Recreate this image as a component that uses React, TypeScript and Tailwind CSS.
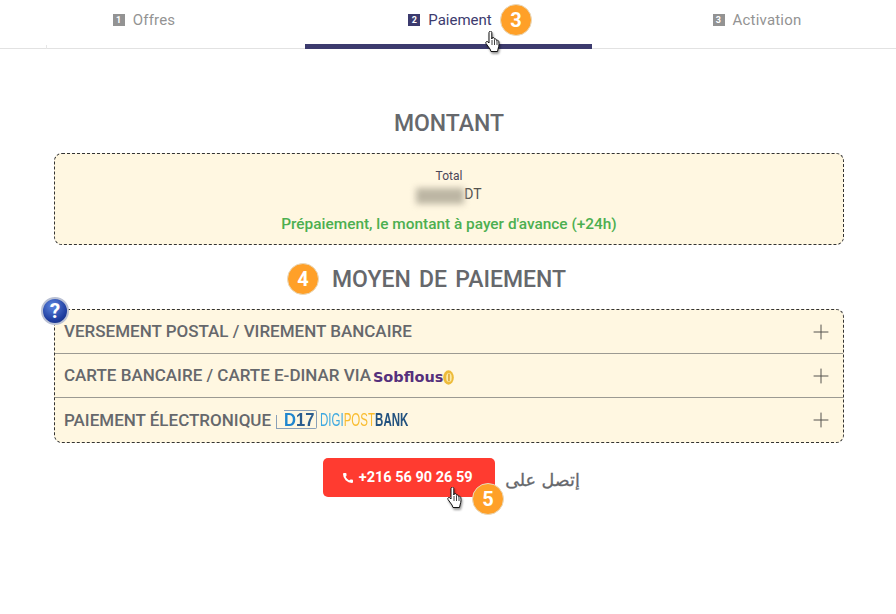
import { Phone, Plus } from "lucide-react";

const tabs = [
  { num: "1", label: "Offres", width: "w-[305px] pr-[17px] tracking-[0.2px]", active: false },
  { num: "2", label: "Paiement", width: "w-[287px] pl-[3px]", active: true },
  { num: "3", label: "Activation", width: "flex-1 pl-[26px] tracking-[0.2px]", active: false },
];

function Badge({ n, className }: { n: string; className: string }) {
  return (
    <div
      className={`absolute flex h-[32px] w-[32px] items-center justify-center rounded-full border border-[#e8d9bd] bg-[#ffa028] text-[20px] font-bold text-white ${className}`}
    >
      {n}
    </div>
  );
}

function HandCursor({ className }: { className: string }) {
  return (
    <svg
      viewBox="1 1 15 22"
      className={`absolute h-[22px] w-[16px] drop-shadow-[1px_2px_1px_rgba(0,0,0,0.4)] ${className}`}
    >
      <path
        d="M5 1.500c.9-.8 2.200-.3 2.300 1V9l.4-1.200c.8-.7 1.900-.4 2.100.6l.1.9c.7-.7 1.900-.4 2.100.6l.1.7c.8-.6 2-.2 2.200.9.4 2.300.2 4.500-.5 6.500l-.8 3.500H6.500L5.500 19 1.500 13.500c-.6-1 .1-2.200 1.200-2 .6.1 1.200.7 1.800 1.500V2.800c0-.5.100-1 .500-1.300z"
        fill="#fff"
        stroke="#111"
        strokeWidth="1"
        strokeLinejoin="round"
      />
      <path d="M7.500 10v5M10 10v5M12.500 11v4" stroke="#111" strokeWidth="0.8" fill="none" />
    </svg>
  );
}

function HelpBall() {
  return (
    <div className="absolute left-[-14px] top-[-13px] flex h-[28px] w-[28px] items-center justify-center rounded-full border-2 border-[#b9c0d4] bg-[radial-gradient(circle_at_40%_30%,#5d86e0,#1d3c9e_65%,#132a78)] text-[21px] font-bold leading-none text-white">
      ?
    </div>
  );
}

function SobflousLogo() {
  return (
    <span className="ml-[2px] mt-[4px] flex items-center">
      <span className="font-['DejaVu_Sans'] text-[14.500px] font-bold leading-none text-[#55307c]">Sobflous</span>
      <svg viewBox="0 0 12 16" className="h-[15px] w-[11px] shrink-0">
        <ellipse cx="6" cy="8" rx="5.800" ry="7.800" fill="#edbb3a" />
        <ellipse cx="6.500" cy="8" rx="3" ry="5" fill="#fbe9a6" />
        <path d="M6.500 4v8" stroke="#d99a1e" strokeWidth="1.500" />
      </svg>
    </span>
  );
}

function DigipostLogo() {
  return (
    <span className="ml-[5px] flex w-[134px] items-center">
      <span className="flex h-[19px] w-[41px] shrink-0">
        <span className="h-[14px] w-[8px] shrink-0 self-end border-b border-l border-[#8aa0b8]" />
        <span className="flex h-[19px] w-[33px] shrink-0 items-center rounded-r-[2px] border border-l-0 border-[#8aa0b8] text-[18px] font-bold leading-none">
          <span className="inline-block origin-left scale-x-[0.92] font-['Liberation_Sans',sans-serif]">
            <span className="text-[#1f86cf]">D</span>
            <span className="text-[#2b5d8f]">17</span>
          </span>
        </span>
      </span>
      <span className="ml-[3px] inline-block origin-left scale-x-[0.64] whitespace-nowrap font-['Liberation_Sans',sans-serif] text-[18px] leading-none">
        <span className="text-[#3fa9e0]">DIGI</span>
        <span className="text-[#f9bc2f]">POST</span>
        <span className="font-bold text-[#23527f]">BANK</span>
      </span>
    </span>
  );
}

const rows = [
  { label: "VERSEMENT POSTAL / VIREMENT BANCAIRE", logo: null },
  { label: "CARTE BANCAIRE / CARTE E-DINAR VIA", logo: <SobflousLogo /> },
  { label: "PAIEMENT ÉLECTRONIQUE", logo: <DigipostLogo /> },
];

export default function App() {
  return (
    <div className="h-[614px] w-[896px] overflow-hidden bg-white font-['Roboto',sans-serif] text-[#66686c]">
      <div className="relative flex h-[49px] border-b border-[#e2e2e2]">
        <div className="absolute bottom-[-1px] left-[46px] h-[4px] w-px bg-[#e6e6e6]" />
        {tabs.map((tab) => (
          <div
            key={tab.num}
            className={`relative flex ${tab.width} justify-center pt-[10px] text-[15px] leading-[20px] ${
              tab.active ? "text-[#3c3b6e]" : "text-[#939393]"
            }`}
          >
            <span className="flex h-[20px] items-center gap-[8px]">
              <span
                className={`flex h-[12px] w-[12px] items-center justify-center text-[9px] font-bold leading-none text-white ${
                  tab.active ? "bg-[#3c3b6e]" : "bg-[#939393]"
                }`}
              >
                {tab.num}
              </span>
              {tab.label}
            </span>
            {tab.active && (
              <>
                <div className="absolute inset-x-0 bottom-[-1px] h-[5px] bg-[#3c3b6e]" />
                <Badge n="3" className="left-[195px] top-[4px]" />
                <HandCursor className="left-[180px] top-[31px]" />
              </>
            )}
          </div>
        ))}
      </div>

      <div className="pl-[54px] pr-[52px]">
        <h2 className="mt-[61px] text-center text-[23px] font-medium leading-[28px]">MONTANT</h2>

        <div className="mt-[15px] flex h-[92px] flex-col items-center rounded-[8px] border border-dashed border-[#333] bg-[#fff7e1] pt-[15px]">
          <div className="text-[12px] leading-[15px] text-[#4b4658]">Total</div>
          <div className="mt-[2px] flex h-[16px] items-center text-[14px] leading-[16px] text-[#55534f]">
            <span className="mt-[3px] h-[16px] w-[48px] bg-[#bdb6a4] blur-[3px]" />
            DT
          </div>
          <div className="mt-[12px] text-[15.400px] font-medium leading-[20px] text-[#4caf50]">
            Prépaiement, le montant à payer d'avance (+24h)
          </div>
        </div>

        <div className="relative mt-[19px] h-[30px]">
          <h2 className="pt-[1px] text-center text-[23px] font-medium leading-[30px] [word-spacing:2.500px]">MOYEN DE PAIEMENT</h2>
          <Badge n="4" className="left-[233px] top-[-1px]" />
        </div>

        <div className="relative mt-[15px] rounded-[8px] border border-dashed border-[#333] bg-[#fff7e1]">
          <HelpBall />
          {rows.map((row, i) => (
            <div
              key={row.label}
              className={`flex h-[44px] items-center justify-between pl-[9px] pr-[10px] ${
                i < rows.length - 1 ? "border-b border-[#9c9a92]" : ""
              }`}
            >
              <span className="flex items-center pb-[1px] text-[17px] font-medium leading-[20px]">
                {row.label}
                {row.logo}
              </span>
              <Plus size={24} strokeWidth={1} className="text-[#55534f]" />
            </div>
          ))}
        </div>

        <div className="relative mt-[15px] flex items-center justify-center pl-[5px]">
          <div className="relative flex h-[39px] w-[172px] items-center justify-center gap-[5px] rounded-[5px] bg-[#ff3b30] pr-[4px] text-[14.500px] font-bold text-white">
            <Phone size={12} fill="currentColor" strokeWidth={0} />
            +216 56 90 26 59
          </div>
          <div
            className="ml-[10px] mt-[4px] font-['DejaVu_Sans',sans-serif] text-[17.500px] leading-[20px] text-[#66686c] [-webkit-text-stroke:0.3px_#66686c]"
            dir="rtl"
          >
            إتصل على
          </div>
          <Badge n="5" className="left-[418px] top-[25px]" />
          <HandCursor className="left-[393px] top-[29px]" />
        </div>
      </div>
    </div>
  );
}
